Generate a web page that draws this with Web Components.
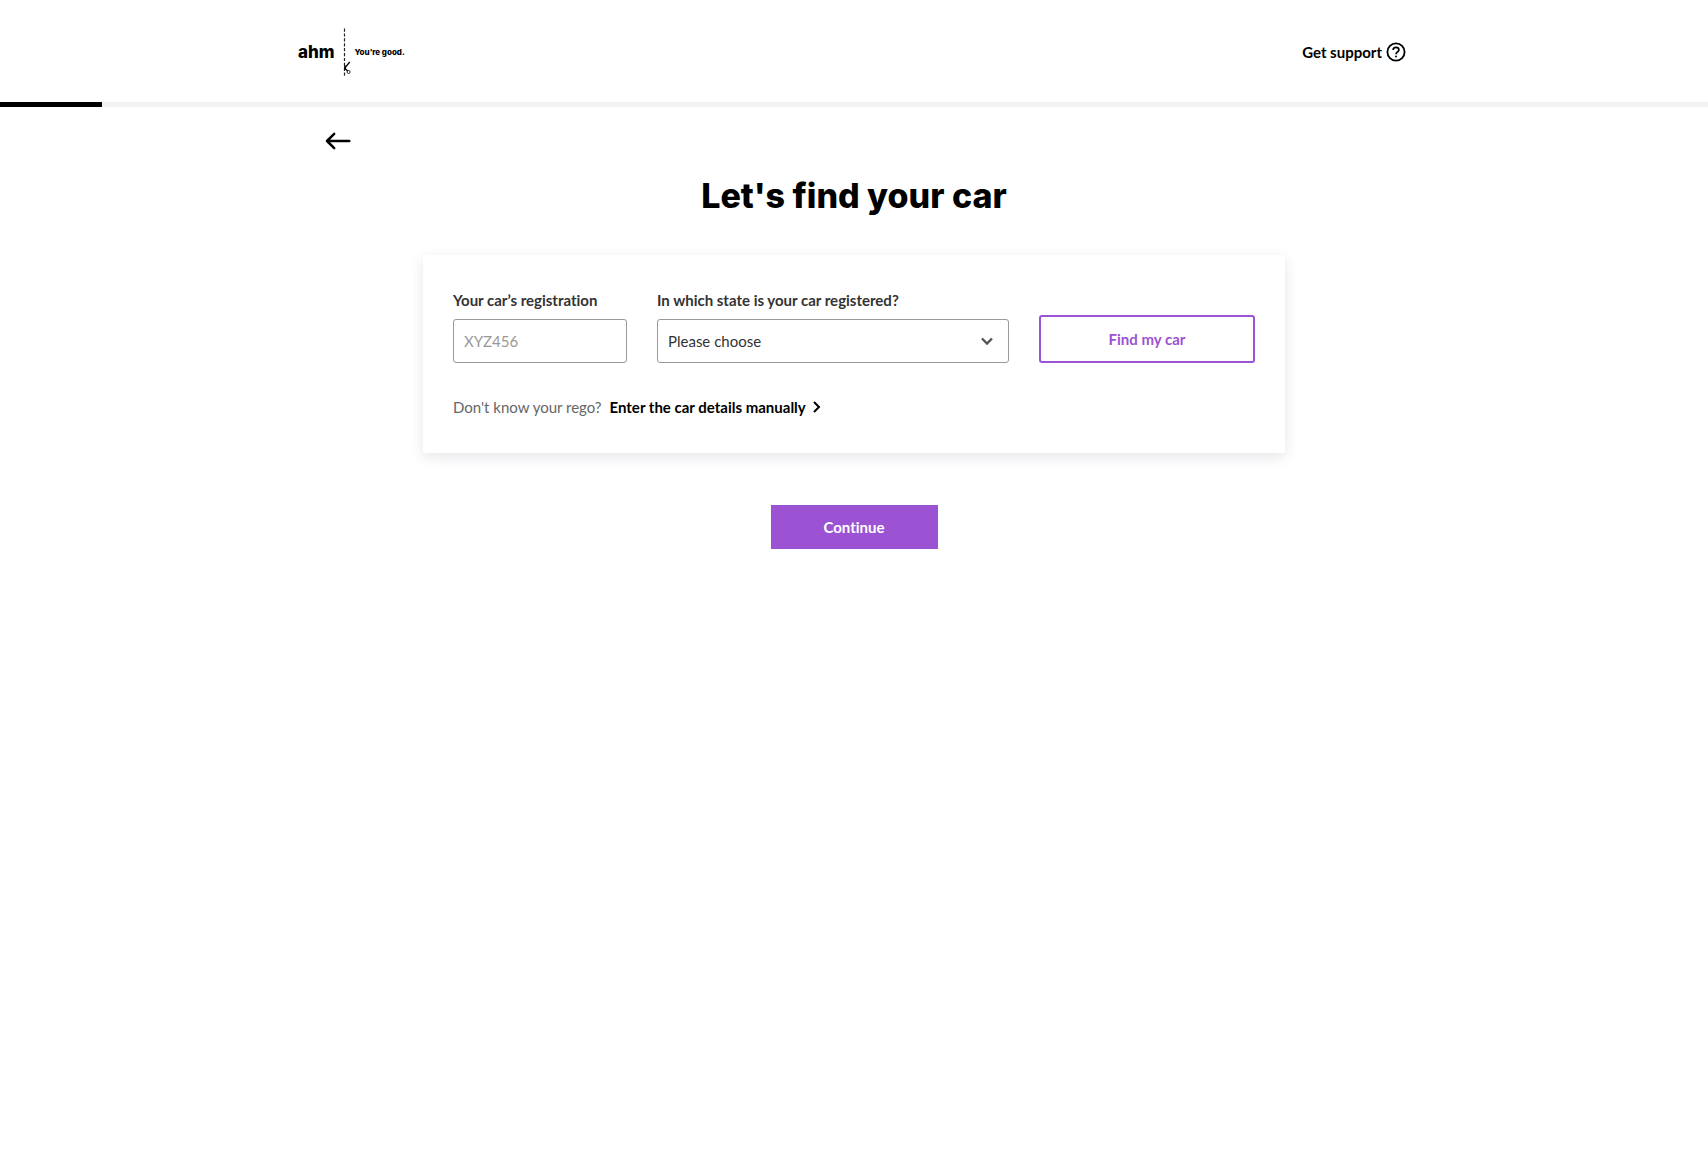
<!DOCTYPE html>
<html lang="en">
<head>
<meta charset="utf-8">
<meta name="viewport" content="width=device-width, initial-scale=1">
<title>Let's find your car</title>
<style>
    body {
        --heavy-font: Inter, Lato, sans-serif;
        margin: 0;
        background: #fff;
        color: #000;
        font-family: Lato, "Open Sans", sans-serif;
        font-size: 15px;
        line-height: 20px;
        font-variant-ligatures: none;
    }
</style>
</head>
<body>
<quote-page progress="6">
    <site-header slot="header"></site-header>
    <back-link slot="back" href="#back"></back-link>
    <span slot="title">Let's find your car</span>
    <car-finder></car-finder>
    <action-button variant="solid" slot="actions">Continue</action-button>
</quote-page>

<template id="quote_page_tpl">
    <style>
        :host {
            display: block;
        }
        .progress {
            height: 5px;
            background: #f2f2f2;
        }
        .bar {
            height: 100%;
            background: #000;
        }
        main {
            display: flex;
            flex-direction: column;
            max-width: 1058px;
            margin: 0 auto;
            padding: 24px;
        }
        h1 {
            margin: 23px 0 37px;
            font-family: var(--heavy-font);
            font-size: 34px;
            line-height: 44px;
            font-weight: 800;
            text-align: center;
        }
        .content {
            width: 100%;
            max-width: 862px;
            margin: 0 auto;
        }
        .actions {
            display: flex;
            justify-content: center;
            margin-top: 52px;
        }
    </style>
    <slot name="header"></slot>
    <div class="progress"><div class="bar"></div></div>
    <main>
        <slot name="back"></slot>
        <h1><slot name="title"></slot></h1>
        <div class="content"><slot></slot></div>
        <div class="actions"><slot name="actions"></slot></div>
    </main>
</template>

<template id="site_header_tpl">
    <style>
        :host {
            display: block;
            padding: 0 24px;
        }
        header {
            box-sizing: border-box;
            display: flex;
            align-items: center;
            justify-content: space-between;
            max-width: 1112px;
            height: 102px;
            margin: 0 auto;
            padding-top: 1px;
        }
        a {
            display: flex;
            align-items: center;
            color: inherit;
            text-decoration: none;
        }
        .brand {
            font-family: var(--heavy-font);
            font-size: 17px;
            font-weight: 800;
        }
        .brand svg {
            margin: 0 4px 0 6px;
        }
        .tagline {
            font-size: 8px;
        }
        .support {
            font-weight: 700;
        }
    </style>
    <header>
        <a class="brand" href="#home">
            <span>ahm</span>
            <svg width="10" height="48" viewBox="0 0 10 48" fill="none" stroke="#000" aria-hidden="true">
                <path d="M3.5 0.5V48" stroke="#222" stroke-width="1.2" stroke-dasharray="3.2 1.7"/>
                <path d="M8.7 34L3.8 40.2L6.6 43" stroke-width="1.3"/>
                <path d="M4 37.5V41.5" stroke-width="1.6"/>
                <circle cx="7.6" cy="44" r="1.5" stroke-width="0.8"/>
            </svg>
            <span class="tagline">You’re good.</span>
        </a>
        <a class="support" href="#support">
            <span>Get support</span>
            <svg width="28" height="28" viewBox="0 0 28 28" fill="none" stroke="#000" aria-hidden="true">
                <circle cx="14" cy="14" r="8.6" stroke-width="1.8"/>
                <path d="M11.1 12.1C11.1 10.4 12.3 9.3 14 9.3S16.9 10.4 16.9 11.9C16.9 13.8 14 14 14 16.3" stroke-width="1.7"/>
                <circle cx="14" cy="18.5" r="1" fill="#000" stroke="none"/>
            </svg>
        </a>
    </header>
</template>

<template id="back_link_tpl">
    <style>
        :host {
            display: flex;
        }
        a {
            display: flex;
            color: inherit;
        }
    </style>
    <a aria-label="Back">
        <svg width="27" height="20" viewBox="0 0 27 20" fill="none" stroke="currentColor" stroke-width="2.5" stroke-linecap="round" stroke-linejoin="round" aria-hidden="true">
            <path d="M24.3 10H2M9.2 2.8L2 10L9.2 17.2"/>
        </svg>
    </a>
</template>

<template id="car_finder_tpl">
    <style>
        :host {
            display: block;
            padding: 35px 30px 36px;
            border-radius: 3px;
            background: #fff;
            box-shadow: 0 4px 14px rgba(40, 50, 80, 0.12);
        }
        form {
            display: grid;
            grid-template-columns: 174fr 352fr 216fr;
            column-gap: 30px;
            align-items: end;
        }
        p {
            display: flex;
            flex-wrap: wrap;
            gap: 8px;
            margin: 34px 0 0;
            color: #666;
        }
        a {
            display: flex;
            align-items: center;
            gap: 6px;
            color: #000;
            font-weight: 700;
            text-decoration: none;
        }
        @media screen and (max-width: 819px) {
            form {
                grid-template-columns: 1fr;
                row-gap: 24px;
            }
        }
    </style>
    <form>
        <text-field label="Your car’s registration" placeholder="XYZ456"></text-field>
        <select-field label="In which state is your car registered?" options="Please choose,ACT,NSW,NT,QLD,SA,TAS,VIC,WA"></select-field>
        <action-button variant="outline">Find my car</action-button>
    </form>
    <p>
        <span>Don't know your rego?</span>
        <a href="#manual">
            <span>Enter the car details manually</span>
            <svg width="10" height="12" viewBox="0 0 10 12" fill="none" stroke="currentColor" stroke-width="2" aria-hidden="true">
                <path d="M2 1L7 6L2 11"/>
            </svg>
        </a>
    </p>
</template>

<template id="text_field_tpl">
    <style>
        :host {
            display: flex;
            flex-direction: column;
            gap: 9px;
            min-width: 0;
        }
        label {
            color: #333;
            font-weight: 700;
        }
        input {
            box-sizing: border-box;
            width: 100%;
            height: 44px;
            padding: 0 10px;
            border: 1px solid #999;
            border-radius: 3px;
            background: #fff;
            color: #333;
            font: inherit;
        }
        input::placeholder {
            color: #999;
            opacity: 1;
        }
    </style>
    <label for="control"></label>
    <input id="control" type="text">
</template>

<template id="select_field_tpl">
    <style>
        :host {
            display: flex;
            flex-direction: column;
            gap: 9px;
            min-width: 0;
        }
        label {
            color: #333;
            font-weight: 700;
        }
        .control {
            display: grid;
            align-items: center;
        }
        select,
        svg {
            grid-area: 1 / 1;
        }
        select {
            box-sizing: border-box;
            appearance: none;
            width: 100%;
            height: 44px;
            padding: 0 40px 0 10px;
            border: 1px solid #999;
            border-radius: 3px;
            background: #fff;
            color: #333;
            font: inherit;
        }
        svg {
            justify-self: end;
            margin-right: 15px;
            pointer-events: none;
        }
    </style>
    <label for="control"></label>
    <div class="control">
        <select id="control"></select>
        <svg width="14" height="10" viewBox="0 0 14 10" fill="none" stroke="#555" stroke-width="2.4" aria-hidden="true">
            <path d="M2 2.5L7 7.5L12 2.5"/>
        </svg>
    </div>
</template>

<template id="action_button_tpl">
    <style>
        :host {
            display: flex;
        }
        button {
            box-sizing: border-box;
            margin: 0;
            font: inherit;
            font-variant-ligatures: none;
            font-weight: 700;
            cursor: pointer;
        }
        .outline {
            width: 100%;
            height: 48px;
            border: 2px solid #9b53d3;
            border-radius: 3px;
            background: #fff;
            color: #9b53d3;
        }
        .solid {
            min-width: 167px;
            height: 44px;
            border: 0;
            background: #9b53d3;
            color: #fff;
        }
    </style>
    <button type="button"><slot></slot></button>
</template>

<script>
    class TemplateElement extends HTMLElement {
        constructor() {
            super();
            this.attachShadow({ mode: 'open' });
            const tpl = document.getElementById(this.constructor.template);
            this.shadowRoot.appendChild(tpl.content.cloneNode(true));
        }
    }

    class QuotePage extends TemplateElement {
        static template = 'quote_page_tpl';

        connectedCallback() {
            const progress = Number(this.getAttribute('progress')) || 0;
            this.shadowRoot.querySelector('.bar').style.width = `${progress}%`;
        }
    }

    class SiteHeader extends TemplateElement {
        static template = 'site_header_tpl';
    }

    class BackLink extends TemplateElement {
        static template = 'back_link_tpl';

        connectedCallback() {
            this.shadowRoot.querySelector('a').href = this.getAttribute('href') || '#';
        }
    }

    class TextField extends TemplateElement {
        static template = 'text_field_tpl';

        connectedCallback() {
            this.shadowRoot.querySelector('label').textContent = this.getAttribute('label');
            this.shadowRoot.querySelector('input').placeholder = this.getAttribute('placeholder') || '';
        }
    }

    class SelectField extends TemplateElement {
        static template = 'select_field_tpl';

        connectedCallback() {
            this.shadowRoot.querySelector('label').textContent = this.getAttribute('label');
            const names = (this.getAttribute('options') || '').split(',');
            const options = names.map(name => new Option(name));
            this.shadowRoot.querySelector('select').replaceChildren(...options);
        }
    }

    class ActionButton extends TemplateElement {
        static template = 'action_button_tpl';

        connectedCallback() {
            this.shadowRoot.querySelector('button').className = this.getAttribute('variant') || 'solid';
        }
    }

    class CarFinder extends TemplateElement {
        static template = 'car_finder_tpl';
    }

    customElements.define('text-field', TextField);
    customElements.define('select-field', SelectField);
    customElements.define('action-button', ActionButton);
    customElements.define('back-link', BackLink);
    customElements.define('site-header', SiteHeader);
    customElements.define('car-finder', CarFinder);
    customElements.define('quote-page', QuotePage);
</script>
</body>
</html>
